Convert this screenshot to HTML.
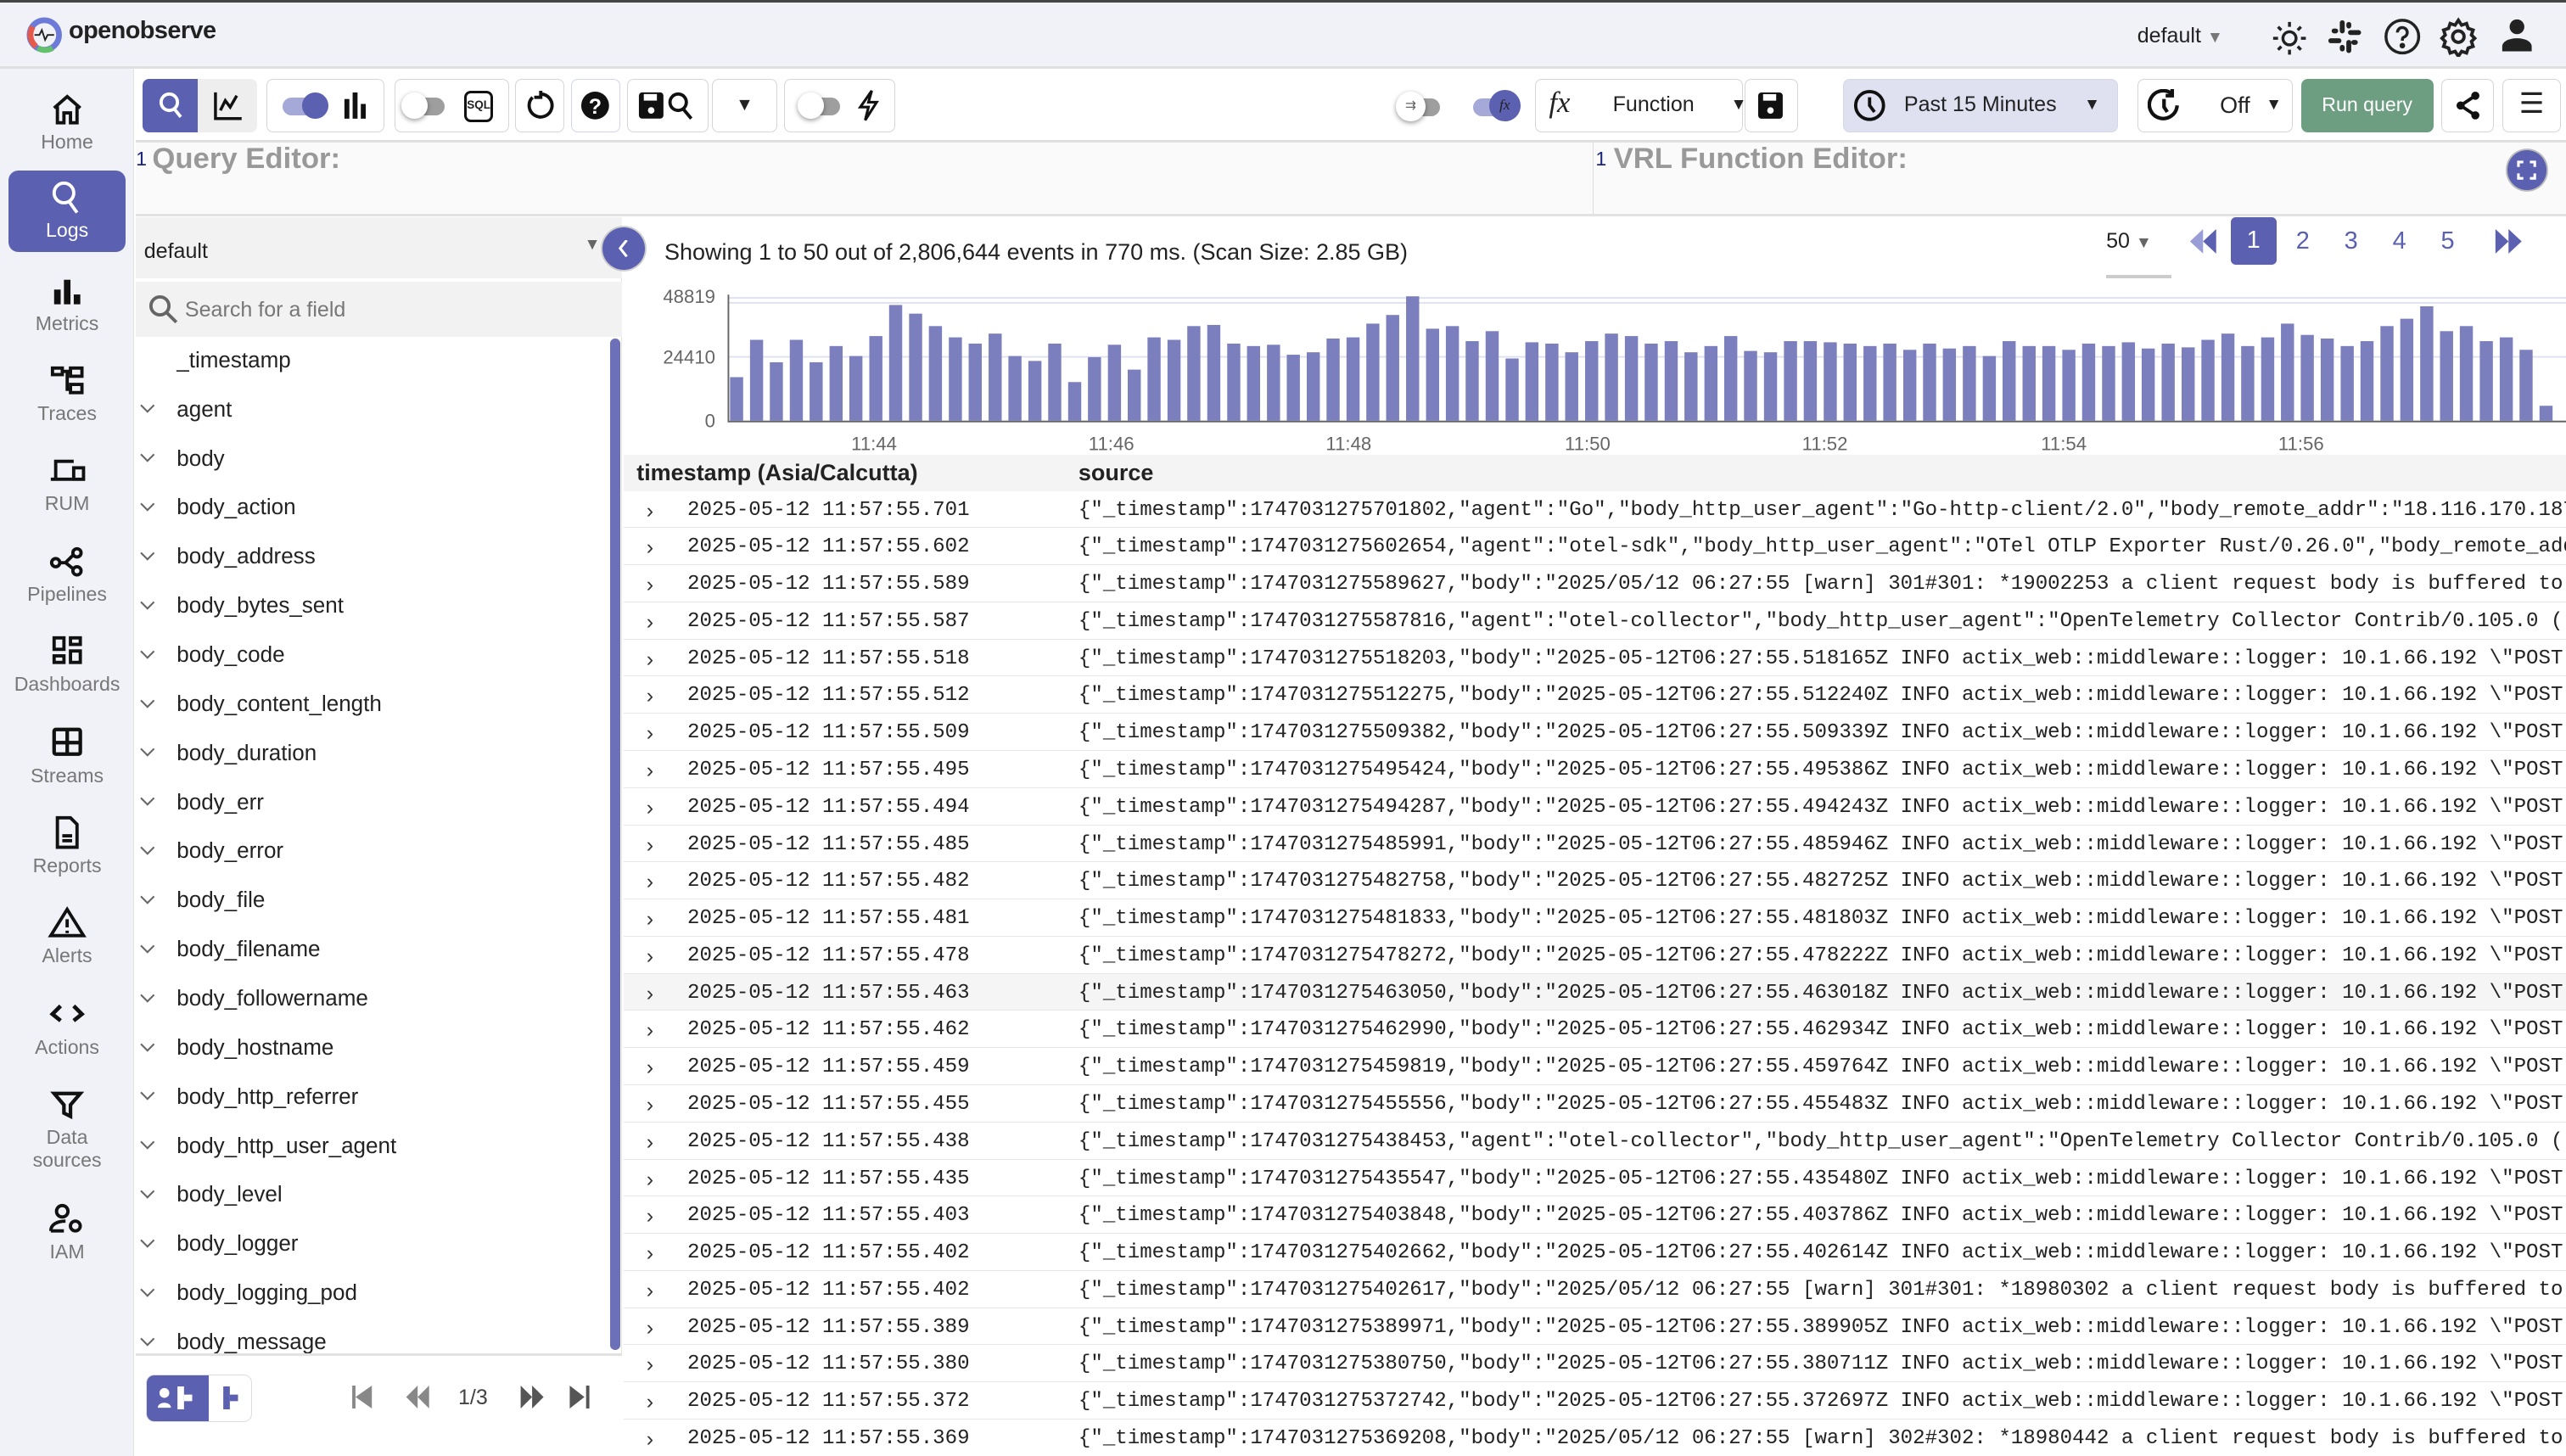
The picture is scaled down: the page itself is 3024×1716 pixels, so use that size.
<!DOCTYPE html>
<html><head><meta charset="utf-8"><style>
*{box-sizing:border-box;margin:0;padding:0}
html,body{width:3024px;height:1716px;overflow:hidden;background:#fff}
#r{zoom:1.92857;width:1568px;height:890px;position:relative;font-family:"Liberation Sans",sans-serif;color:#222;overflow:hidden}
.a{position:absolute}
.top{left:0;top:0;width:1568px;height:42px;background:#f1f2f7;border-top:2px solid #444;border-bottom:2px solid #e0e0e0}
.nav{left:0;top:42px;width:82px;height:848px;background:#f1f2f7;border-right:1px solid #e4e4e4}
.ni{position:absolute;left:5px;width:72px;text-align:center;font-size:12px;color:#777}
.ni svg{display:block;margin:0 auto 2px}
.tb{left:83px;top:44px;width:1485px;height:43px;background:#fff;border-bottom:2px solid #e0e0e0}
.btn{position:absolute;top:4px;height:33px;border:1px solid #d6d6d6;border-radius:4px;background:#fff}
.ed{top:87px;height:45px;background:#fafafa;border-bottom:2px solid #e2e2e2}
.fl{left:83px;top:133px;width:297px;height:757px;background:#fff;border-right:1px solid #e4e4e4}
.fi{position:absolute;left:25px;font-size:13.5px;color:#222}
.fi i{position:absolute;left:-21px;top:3px;width:6px;height:6px;border-right:1.4px solid #666;border-bottom:1.4px solid #666;transform:rotate(45deg)}
.row{position:absolute;left:381px;width:1187px;height:22.7px;border-bottom:1px solid #e6e6e6;font-family:"Liberation Mono",monospace;font-size:12.5px;line-height:24px;white-space:pre;overflow:hidden}
.row span.c{position:absolute;left:14px;color:#333;font-family:"Liberation Sans";font-size:13px}
.row span.t{position:absolute;left:39px}
.row span.s{position:absolute;left:278px}
</style></head><body><div id="r">
<div class="a top">
 <svg class="a" style="left:16px;top:9px" width="22" height="22" viewBox="0 0 22 22"><circle cx="11" cy="11" r="9" fill="none" stroke="#6c7ad8" stroke-width="3.5"/><path d="M4 6 A9 9 0 0 0 6 18" stroke="#e55a4a" stroke-width="3.5" fill="none"/><path d="M7 19 A9 9 0 0 0 16 19" stroke="#63c06c" stroke-width="3.5" fill="none"/><path d="M5 11h3l1.5-3 2 6 1.5-3h4" stroke="#222" stroke-width="1" fill="none"/></svg>
 <div class="a" style="left:42px;top:9px;font-size:15px;font-weight:bold;color:#222;letter-spacing:-.3px">openobserve</div>
 <div class="a" style="left:1306px;top:13px;font-size:13px">default <span style="color:#777;font-size:10px">▼</span></div>
 <svg class="a" style="left:1387px;top:10px" width="24" height="24" viewBox="0 0 24 24" fill="none" stroke="#222" stroke-width="1.8"><circle cx="12" cy="12" r="4"/><path d="M12 2v3M12 19v3M2 12h3M19 12h3M5 5l2 2M17 17l2 2M5 19l2-2M17 7l2-2"/></svg>
 <svg class="a" style="left:1422px;top:10px" width="22" height="22" viewBox="0 0 22 22" fill="#222"><rect x="8" y="1" width="3" height="8" rx="1.5"/><rect x="12" y="13" width="3" height="8" rx="1.5"/><rect x="1" y="12" width="8" height="3" rx="1.5"/><rect x="13" y="7" width="8" height="3" rx="1.5"/><rect x="3" y="6" width="4" height="3" rx="1.5"/><rect x="15" y="13" width="4" height="3" rx="1.5"/><rect x="12" y="2" width="3" height="4" rx="1.5"/><rect x="8" y="16" width="3" height="4" rx="1.5"/></svg>
 <svg class="a" style="left:1456px;top:9px" width="24" height="24" viewBox="0 0 24 24" fill="none" stroke="#222" stroke-width="1.8"><circle cx="12" cy="12" r="10"/><path d="M9 9.5a3 3 0 1 1 4 2.8c-1 .5-1 1-1 2.2"/><circle cx="12" cy="17.5" r=".8" fill="#222"/></svg>
 <svg class="a" style="left:1490px;top:9px" width="24" height="24" viewBox="0 0 24 24" fill="none" stroke="#222" stroke-width="2"><circle cx="12" cy="12" r="3.5"/><path d="M12 2l2 3 3-1 1 3 3 1-1 3 2 2-2 2 1 3-3 1-1 3-3-1-2 3-2-3-3 1-1-3-3-1 1-3-2-2 2-2-1-3 3-1 1-3 3 1z"/></svg>
 <svg class="a" style="left:1527px;top:9px" width="22" height="22" viewBox="0 0 22 22" fill="#222"><circle cx="11" cy="6" r="4.5"/><path d="M2 21v-3c0-3 4-5 9-5s9 2 9 5v3z"/></svg>
</div>
<div class="a nav">
 <div class="ni" style="top:14px"><svg width="22" height="22" viewBox="0 0 22 22" fill="none" stroke="#111" stroke-width="2"><path d="M3 10L11 3l8 7M5 9v10h4v-6h4v6h4V9"/></svg>Home</div>
 <div class="ni" style="top:62px;height:50px;background:#5b60b0;border-radius:6px;color:#fff;padding-top:6px"><svg width="22" height="22" viewBox="0 0 22 22" fill="none" stroke="#fff" stroke-width="2"><circle cx="9" cy="8" r="6"/><path d="M12 13l5 7"/></svg>Logs</div>
 <div class="ni" style="top:125px"><svg width="22" height="22" viewBox="0 0 22 22" fill="#111"><rect x="3" y="10" width="4" height="9"/><rect x="9" y="4" width="4" height="15"/><rect x="15" y="13" width="4" height="6"/></svg>Metrics</div>
 <div class="ni" style="top:180px"><svg width="22" height="22" viewBox="0 0 22 22" fill="none" stroke="#111" stroke-width="2"><rect x="2" y="3" width="6" height="4"/><rect x="13" y="3" width="7" height="5"/><rect x="13" y="13" width="7" height="5"/><path d="M8 5h5M11 5v11h2"/></svg>Traces</div>
 <div class="ni" style="top:235px"><svg width="24" height="22" viewBox="0 0 24 22" fill="none" stroke="#111" stroke-width="2"><path d="M5 15V5h11M2 16h13"/><rect x="16" y="9" width="6" height="7"/></svg>RUM</div>
 <div class="ni" style="top:290px"><svg width="24" height="22" viewBox="0 0 24 22" fill="none" stroke="#111" stroke-width="2"><circle cx="5" cy="12" r="2.5"/><circle cx="18" cy="6" r="2.5"/><circle cx="18" cy="17" r="2.5"/><path d="M7 12h4l5-5M11 12l5 4"/></svg>Pipelines</div>
 <div class="ni" style="top:345px"><svg width="22" height="22" viewBox="0 0 22 22" fill="none" stroke="#111" stroke-width="2"><rect x="3" y="3" width="6" height="7"/><rect x="13" y="3" width="6" height="4"/><rect x="3" y="14" width="6" height="4"/><rect x="13" y="11" width="6" height="7"/></svg>Dashboards</div>
 <div class="ni" style="top:401px"><svg width="22" height="22" viewBox="0 0 22 22" fill="none" stroke="#111" stroke-width="2.2"><rect x="3" y="3" width="16" height="15" rx="1"/><path d="M3 11h16M11 3v15"/></svg>Streams</div>
 <div class="ni" style="top:456px"><svg width="22" height="22" viewBox="0 0 22 22" fill="none" stroke="#111" stroke-width="2"><path d="M5 2h8l4 4v14H5z M8 13h6M8 16h6"/></svg>Reports</div>
 <div class="ni" style="top:511px"><svg width="24" height="22" viewBox="0 0 24 22" fill="none" stroke="#111" stroke-width="2"><path d="M12 3L2 19h20z"/><path d="M12 9v5M12 16v1.5"/></svg>Alerts</div>
 <div class="ni" style="top:567px"><svg width="24" height="22" viewBox="0 0 24 22" fill="none" stroke="#111" stroke-width="2.4"><path d="M8 6l-5 5 5 4M16 6l5 5-5 4"/></svg>Actions</div>
 <div class="ni" style="top:622px;line-height:14px"><svg width="22" height="22" viewBox="0 0 22 22" fill="none" stroke="#111" stroke-width="2.2"><path d="M3 4h16l-6 7v7l-4-2v-5z"/></svg>Data<br>sources</div>
 <div class="ni" style="top:692px"><svg width="24" height="22" viewBox="0 0 24 22" fill="none" stroke="#111" stroke-width="2"><circle cx="9" cy="6" r="3.5"/><path d="M2 18c0-4 4-6 9-6M2 18h8"/><circle cx="17" cy="15" r="3"/></svg>IAM</div>
</div>
<div class="a tb">
 <div class="btn" style="left:4px;width:34px;background:#5b60b0;border-color:#5b60b0;border-radius:4px 0 0 4px"><svg style="margin:7px 9px" width="16" height="18" viewBox="0 0 16 18" fill="none" stroke="#fff" stroke-width="2"><circle cx="7" cy="7" r="5"/><path d="M10 11l4 5"/></svg></div>
 <div class="btn" style="left:38px;width:36px;background:#eee;border-color:#eee;border-radius:0 4px 4px 0"><svg style="margin:7px 9px" width="18" height="18" viewBox="0 0 18 18" fill="none" stroke="#111" stroke-width="1.8"><path d="M1 1v16h16M4 12l3-6 3 4 4-7"/></svg></div>
 <div class="btn" style="left:80px;width:72px"><div class="a" style="left:9px;top:11px;width:24px;height:11px;background:#a5a9d8;border-radius:6px"></div><div class="a" style="left:21px;top:8px;width:16px;height:16px;background:#5b60b0;border-radius:50%"></div><svg class="a" style="left:46px;top:8px" width="16" height="16" fill="#111"><rect x="1" y="4" width="3" height="12"/><rect x="6" y="0" width="3" height="16"/><rect x="11" y="7" width="3" height="9"/></svg></div>
 <div class="btn" style="left:158px;width:70px"><div class="a" style="left:6px;top:11px;width:24px;height:11px;background:#9e9e9e;border-radius:6px"></div><div class="a" style="left:4px;top:8px;width:16px;height:16px;background:#fff;border-radius:50%;box-shadow:0 1px 3px rgba(0,0,0,.4)"></div><div class="a" style="left:42px;top:7px;width:18px;height:19px;border:2px solid #111;border-radius:4px;font-size:7px;font-weight:bold;line-height:15px;text-align:center">SQL</div></div>
 <div class="btn" style="left:232px;width:30px"><svg style="margin:7px 5px" width="18" height="18" viewBox="0 0 18 18" fill="none" stroke="#111" stroke-width="2"><path d="M5 4a7 7 0 1 0 5-2M10 0v4H6"/></svg></div>
 <div class="btn" style="left:266px;width:30px;border-color:#d3d5ee"><svg style="margin:7px 5px" width="18" height="18" viewBox="0 0 18 18"><circle cx="9" cy="9" r="8.5" fill="#111"/><text x="9" y="14" font-size="13" font-weight="bold" fill="#fff" text-anchor="middle" font-family="Liberation Sans">?</text></svg></div>
 <div class="btn" style="left:300px;width:50px"><svg class="a" style="left:6px;top:7px" width="36" height="18" viewBox="0 0 36 18"><rect x="1" y="1" width="15" height="16" rx="2" fill="#111"/><rect x="4" y="2" width="8" height="4" fill="#fff"/><circle cx="8.5" cy="12" r="2" fill="#fff"/><circle cx="25" cy="7" r="5" fill="none" stroke="#111" stroke-width="2"/><path d="M28 11l5 6" stroke="#111" stroke-width="2"/></svg></div>
 <div class="btn" style="left:352px;width:40px;font-size:11px;text-align:center;line-height:31px">▼</div>
 <div class="btn" style="left:396px;width:68px"><div class="a" style="left:12px;top:11px;width:22px;height:11px;background:#9e9e9e;border-radius:6px"></div><div class="a" style="left:8px;top:8px;width:16px;height:16px;background:#fff;border-radius:50%;box-shadow:0 1px 3px rgba(0,0,0,.4)"></div><svg class="a" style="left:44px;top:6px" width="14" height="20" viewBox="0 0 14 20" fill="none" stroke="#111" stroke-width="1.6"><path d="M9 1L2 11h5l-2 8 7-11H7z"/></svg></div>
 <div class="a" style="left:775px;top:16px;width:22px;height:11px;background:#9e9e9e;border-radius:6px"></div><div class="a" style="left:770px;top:12px;width:18px;height:18px;background:#fff;border-radius:50%;box-shadow:0 1px 3px rgba(0,0,0,.4);font-size:8px;text-align:center;line-height:18px;color:#666">⇉</div>
 <div class="a" style="left:817px;top:16px;width:22px;height:11px;background:#a5a9d8;border-radius:6px"></div><div class="a" style="left:827px;top:11px;width:19px;height:19px;background:#5b60b0;border-radius:50%;font-size:9px;font-style:italic;text-align:center;line-height:19px;font-family:'Liberation Serif'">fx</div>
 <div class="btn" style="left:855px;width:127px"><span class="a" style="left:8px;top:4px;font-family:'Liberation Serif';font-style:italic;font-size:18px">fx</span><span class="a" style="left:47px;top:8px;font-size:13px">Function</span><span class="a" style="left:119px;top:10px;font-size:10px">▼</span></div>
 <div class="btn" style="left:983px;width:33px"><svg style="margin:8px 8px" width="15" height="16" viewBox="0 0 15 16"><rect x="0" y="0" width="15" height="16" rx="2" fill="#111"/><rect x="3" y="1" width="8" height="4" fill="#fff"/><circle cx="7.5" cy="11" r="2" fill="#fff"/></svg></div>
 <div class="btn" style="left:1043px;width:168px;background:#dfe1f0;border-color:#d5d7e8"><svg class="a" style="left:6px;top:6px" width="20" height="20" viewBox="0 0 20 20" fill="none" stroke="#111" stroke-width="2"><circle cx="10" cy="10" r="8.5"/><path d="M10 5v5l3 4"/></svg><span class="a" style="left:37px;top:8px;font-size:13px">Past 15 Minutes</span><span class="a" style="left:147px;top:10px;font-size:10px">▼</span></div>
 <div class="btn" style="left:1223px;width:95px"><svg class="a" style="left:6px;top:6px" width="20" height="20" viewBox="0 0 20 20" fill="none" stroke="#111" stroke-width="2.2"><path d="M15 3A8.5 8.5 0 1 0 18 10M15 0v4h-4M10 6v5l2 3"/></svg><span class="a" style="left:50px;top:8px;font-size:14px">Off</span><span class="a" style="left:78px;top:10px;font-size:10px">▼</span></div>
 <div class="btn" style="left:1323px;width:81px;background:#6d9e81;border-color:#6d9e81;color:#fff;font-size:12px;text-align:center;line-height:31px">Run query</div>
 <div class="btn" style="left:1409px;width:32px"><svg style="margin:7px 8px" width="16" height="18" viewBox="0 0 16 18" fill="#111"><circle cx="12" cy="3" r="2.5"/><circle cx="3" cy="9" r="2.5"/><circle cx="12" cy="15" r="2.5"/><path d="M12 3L3 9l9 6" stroke="#111" stroke-width="2" fill="none"/></svg></div>
 <div class="btn" style="left:1446px;width:36px;font-size:17px;text-align:center;line-height:29px">☰</div>
</div>
<div class="a ed" style="left:83px;width:891px;border-right:1px solid #ddd"><span class="a" style="left:0;top:3px;font-size:12px;color:#1a237e">1</span><span class="a" style="left:10px;top:0;font-size:18px;font-weight:bold;color:#999">Query Editor:</span></div>
<div class="a ed" style="left:974px;width:594px"><span class="a" style="left:1px;top:3px;font-size:12px;color:#1a237e">1</span><span class="a" style="left:12px;top:0;font-size:18px;font-weight:bold;color:#999">VRL Function Editor:</span><div class="a" style="left:558px;top:5px;width:24px;height:24px;border-radius:50%;background:#5b60b0;box-shadow:0 0 0 1px #bbb"><svg style="margin:6px" width="12" height="12" fill="none" stroke="#fff" stroke-width="1.6"><path d="M1 4V1h3M8 1h3v3M11 8v3H8M4 11H1V8"/></svg></div></div>
<div class="a fl">
 <div class="a" style="left:0;top:0;width:297px;height:37px;background:#f2f2f2"><span class="a" style="left:5px;top:13px;font-size:13px">default</span><span class="a" style="left:274px;top:11px;font-size:10px;color:#666">▼</span></div>
 <div class="a" style="left:0;top:39px;width:297px;height:34px;background:#f2f2f2"><svg class="a" style="left:8px;top:8px" width="18" height="18" fill="none" stroke="#666" stroke-width="2"><circle cx="7" cy="7" r="5.5"/><path d="M11 11l6 6"/></svg><span class="a" style="left:30px;top:10px;font-size:13px;color:#777">Search for a field</span></div>
 <div class="a" style="left:290px;top:74px;width:6px;height:618px;background:#5b60b0;border-radius:3px;opacity:.9"></div>
 <div class="fi" style="top:79px">_timestamp</div>
 <div class="fi" style="top:109px"><i></i>agent</div>
 <div class="fi" style="top:139px"><i></i>body</div>
 <div class="fi" style="top:169px"><i></i>body_action</div>
 <div class="fi" style="top:199px"><i></i>body_address</div>
 <div class="fi" style="top:229px"><i></i>body_bytes_sent</div>
 <div class="fi" style="top:259px"><i></i>body_code</div>
 <div class="fi" style="top:289px"><i></i>body_content_length</div>
 <div class="fi" style="top:319px"><i></i>body_duration</div>
 <div class="fi" style="top:349px"><i></i>body_err</div>
 <div class="fi" style="top:379px"><i></i>body_error</div>
 <div class="fi" style="top:409px"><i></i>body_file</div>
 <div class="fi" style="top:439px"><i></i>body_filename</div>
 <div class="fi" style="top:469px"><i></i>body_followername</div>
 <div class="fi" style="top:499px"><i></i>body_hostname</div>
 <div class="fi" style="top:529px"><i></i>body_http_referrer</div>
 <div class="fi" style="top:559px"><i></i>body_http_user_agent</div>
 <div class="fi" style="top:589px"><i></i>body_level</div>
 <div class="fi" style="top:619px"><i></i>body_logger</div>
 <div class="fi" style="top:649px"><i></i>body_logging_pod</div>
 <div class="fi" style="top:679px"><i></i>body_message</div>
 <div class="a" style="left:0;top:694px;width:297px;height:63px;background:#fff;border-top:2px solid #e2e2e2"></div>
 <div class="a" style="left:6px;top:707px;width:65px;height:29px;border:1px solid #ddd;border-radius:5px;overflow:hidden"><div class="a" style="left:0;top:0;width:38px;height:29px;background:#5b60b0"></div><svg class="a" style="left:7px;top:7px" width="52" height="14" fill="#fff"><circle cx="4" cy="4" r="3"/><path d="M0 13c0-4 8-4 8 0z"/><rect x="12" y="0" width="4" height="14"/><rect x="16" y="5" width="5" height="4"/><g fill="#5b60b0"><rect x="40" y="0" width="4" height="14"/><rect x="44" y="5" width="5" height="4"/></g></svg></div>
 <svg class="a" style="left:132px;top:714px" width="150" height="14" viewBox="0 0 150 14"><g fill="#888"><rect x="0" y="0" width="2" height="14"/><path d="M2 7l10-7v14z"/><path d="M33 7l7-7v14z"/><path d="M40 7l7-7v14z"/></g><g fill="#555"><path d="M103 0l7 7-7 7z"/><path d="M110 0l7 7-7 7z"/><path d="M133 0l9 7-9 7z"/><rect x="143" y="0" width="2" height="14"/></g></svg>
 <span class="a" style="left:197px;top:714px;font-size:13px;color:#444">1/3</span>
</div>
<div class="a" style="left:368px;top:139px;width:26px;height:26px;border-radius:50%;background:#5b60b0;box-shadow:0 0 0 1px #ccc"><svg style="margin:8px 9px" width="8" height="10" fill="none" stroke="#fff" stroke-width="1.6"><path d="M6 0L2 5l4 5"/></svg></div>
<div class="a" style="left:406px;top:146px;font-size:14px">Showing 1 to 50 out of 2,806,644 events in 770 ms. (Scan Size: 2.85 GB)</div>
<div class="a" style="left:1287px;top:140px;font-size:13px">50 <span style="color:#666;font-size:10px">▼</span></div>
<div class="a" style="left:1287px;top:168px;width:40px;height:2px;background:#ccc"></div>
<svg class="a" style="left:1336px;top:140px" width="20" height="15"><path d="M10 0L2 7.5 10 15z" fill="#9a9ed6"/><path d="M18 0l-8 7.5 8 7.5z" fill="#5b60b0"/></svg>
<div class="a" style="left:1363px;top:133px;width:28px;height:29px;background:#5b60b0;border-radius:3px;color:#fff;text-align:center;line-height:29px;font-size:15px">1</div>
<div class="a" style="left:1403px;top:139px;font-size:15px;color:#5b60b0;word-spacing:17px">2 3 4 5</div>
<svg class="a" style="left:1523px;top:140px" width="20" height="15"><path d="M2 0l8 7.5L2 15z" fill="#5b60b0"/><path d="M10 0l8 7.5-8 7.5z" fill="#5b60b0"/></svg>
<svg class="a" style="left:381px;top:170px" width="1187" height="110" font-family="Liberation Sans" font-size="11.5" fill="#666">
 <text x="56" y="15" text-anchor="end">48819</text><text x="56" y="52" text-anchor="end">24410</text><text x="56" y="91" text-anchor="end">0</text>
 <line x1="64" y1="12" x2="1187" y2="12" stroke="#dfe1f0"/><line x1="64" y1="15" x2="1187" y2="15" stroke="#dfe1f0"/><line x1="64" y1="48" x2="1187" y2="48" stroke="#dfe1f0"/>
 <line x1="64" y1="10" x2="64" y2="88" stroke="#666"/><line x1="64" y1="87.5" x2="1187" y2="87.5" stroke="#666"/>
 <text x="153" y="105" text-anchor="middle">11:44</text><text x="298" y="105" text-anchor="middle">11:46</text><text x="443" y="105" text-anchor="middle">11:48</text><text x="589" y="105" text-anchor="middle">11:50</text><text x="734" y="105" text-anchor="middle">11:52</text><text x="880" y="105" text-anchor="middle">11:54</text><text x="1025" y="105" text-anchor="middle">11:56</text>
 <g id="bars" fill="#7b7fbd"></g>
</svg>
<div class="a" style="left:381px;top:278px;width:1187px;height:22px;background:#f4f4f4;font-size:14px;font-weight:bold"><span class="a" style="left:8px;top:3px">timestamp (Asia/Calcutta)</span><span class="a" style="left:278px;top:3px">source</span></div>
<div id="rows">
<div class="row" style="top:300px"><span class="c">›</span><span class="t">2025-05-12 11:57:55.701</span><span class="s">{"_timestamp":1747031275701802,"agent":"Go","body_http_user_agent":"Go-http-client/2.0","body_remote_addr":"18.116.170.187"</span></div>
<div class="row" style="top:322.7px"><span class="c">›</span><span class="t">2025-05-12 11:57:55.602</span><span class="s">{"_timestamp":1747031275602654,"agent":"otel-sdk","body_http_user_agent":"OTel OTLP Exporter Rust/0.26.0","body_remote_addr"</span></div>
<div class="row" style="top:345.4px"><span class="c">›</span><span class="t">2025-05-12 11:57:55.589</span><span class="s">{"_timestamp":1747031275589627,"body":"2025/05/12 06:27:55 [warn] 301#301: *19002253 a client request body is buffered to</span></div>
<div class="row" style="top:368.1px"><span class="c">›</span><span class="t">2025-05-12 11:57:55.587</span><span class="s">{"_timestamp":1747031275587816,"agent":"otel-collector","body_http_user_agent":"OpenTelemetry Collector Contrib/0.105.0 (</span></div>
<div class="row" style="top:390.8px"><span class="c">›</span><span class="t">2025-05-12 11:57:55.518</span><span class="s">{"_timestamp":1747031275518203,"body":"2025-05-12T06:27:55.518165Z INFO actix_web::middleware::logger: 10.1.66.192 \"POST</span></div>
<div class="row" style="top:413.5px"><span class="c">›</span><span class="t">2025-05-12 11:57:55.512</span><span class="s">{"_timestamp":1747031275512275,"body":"2025-05-12T06:27:55.512240Z INFO actix_web::middleware::logger: 10.1.66.192 \"POST</span></div>
<div class="row" style="top:436.2px"><span class="c">›</span><span class="t">2025-05-12 11:57:55.509</span><span class="s">{"_timestamp":1747031275509382,"body":"2025-05-12T06:27:55.509339Z INFO actix_web::middleware::logger: 10.1.66.192 \"POST</span></div>
<div class="row" style="top:458.9px"><span class="c">›</span><span class="t">2025-05-12 11:57:55.495</span><span class="s">{"_timestamp":1747031275495424,"body":"2025-05-12T06:27:55.495386Z INFO actix_web::middleware::logger: 10.1.66.192 \"POST</span></div>
<div class="row" style="top:481.6px"><span class="c">›</span><span class="t">2025-05-12 11:57:55.494</span><span class="s">{"_timestamp":1747031275494287,"body":"2025-05-12T06:27:55.494243Z INFO actix_web::middleware::logger: 10.1.66.192 \"POST</span></div>
<div class="row" style="top:504.3px"><span class="c">›</span><span class="t">2025-05-12 11:57:55.485</span><span class="s">{"_timestamp":1747031275485991,"body":"2025-05-12T06:27:55.485946Z INFO actix_web::middleware::logger: 10.1.66.192 \"POST</span></div>
<div class="row" style="top:527px"><span class="c">›</span><span class="t">2025-05-12 11:57:55.482</span><span class="s">{"_timestamp":1747031275482758,"body":"2025-05-12T06:27:55.482725Z INFO actix_web::middleware::logger: 10.1.66.192 \"POST</span></div>
<div class="row" style="top:549.7px"><span class="c">›</span><span class="t">2025-05-12 11:57:55.481</span><span class="s">{"_timestamp":1747031275481833,"body":"2025-05-12T06:27:55.481803Z INFO actix_web::middleware::logger: 10.1.66.192 \"POST</span></div>
<div class="row" style="top:572.4px"><span class="c">›</span><span class="t">2025-05-12 11:57:55.478</span><span class="s">{"_timestamp":1747031275478272,"body":"2025-05-12T06:27:55.478222Z INFO actix_web::middleware::logger: 10.1.66.192 \"POST</span></div>
<div class="row" style="top:595.1px;background:#f5f5f5"><span class="c">›</span><span class="t">2025-05-12 11:57:55.463</span><span class="s">{"_timestamp":1747031275463050,"body":"2025-05-12T06:27:55.463018Z INFO actix_web::middleware::logger: 10.1.66.192 \"POST</span></div>
<div class="row" style="top:617.8px"><span class="c">›</span><span class="t">2025-05-12 11:57:55.462</span><span class="s">{"_timestamp":1747031275462990,"body":"2025-05-12T06:27:55.462934Z INFO actix_web::middleware::logger: 10.1.66.192 \"POST</span></div>
<div class="row" style="top:640.5px"><span class="c">›</span><span class="t">2025-05-12 11:57:55.459</span><span class="s">{"_timestamp":1747031275459819,"body":"2025-05-12T06:27:55.459764Z INFO actix_web::middleware::logger: 10.1.66.192 \"POST</span></div>
<div class="row" style="top:663.2px"><span class="c">›</span><span class="t">2025-05-12 11:57:55.455</span><span class="s">{"_timestamp":1747031275455556,"body":"2025-05-12T06:27:55.455483Z INFO actix_web::middleware::logger: 10.1.66.192 \"POST</span></div>
<div class="row" style="top:685.9px"><span class="c">›</span><span class="t">2025-05-12 11:57:55.438</span><span class="s">{"_timestamp":1747031275438453,"agent":"otel-collector","body_http_user_agent":"OpenTelemetry Collector Contrib/0.105.0 (</span></div>
<div class="row" style="top:708.6px"><span class="c">›</span><span class="t">2025-05-12 11:57:55.435</span><span class="s">{"_timestamp":1747031275435547,"body":"2025-05-12T06:27:55.435480Z INFO actix_web::middleware::logger: 10.1.66.192 \"POST</span></div>
<div class="row" style="top:731.3px"><span class="c">›</span><span class="t">2025-05-12 11:57:55.403</span><span class="s">{"_timestamp":1747031275403848,"body":"2025-05-12T06:27:55.403786Z INFO actix_web::middleware::logger: 10.1.66.192 \"POST</span></div>
<div class="row" style="top:754px"><span class="c">›</span><span class="t">2025-05-12 11:57:55.402</span><span class="s">{"_timestamp":1747031275402662,"body":"2025-05-12T06:27:55.402614Z INFO actix_web::middleware::logger: 10.1.66.192 \"POST</span></div>
<div class="row" style="top:776.7px"><span class="c">›</span><span class="t">2025-05-12 11:57:55.402</span><span class="s">{"_timestamp":1747031275402617,"body":"2025/05/12 06:27:55 [warn] 301#301: *18980302 a client request body is buffered to</span></div>
<div class="row" style="top:799.4px"><span class="c">›</span><span class="t">2025-05-12 11:57:55.389</span><span class="s">{"_timestamp":1747031275389971,"body":"2025-05-12T06:27:55.389905Z INFO actix_web::middleware::logger: 10.1.66.192 \"POST</span></div>
<div class="row" style="top:822.1px"><span class="c">›</span><span class="t">2025-05-12 11:57:55.380</span><span class="s">{"_timestamp":1747031275380750,"body":"2025-05-12T06:27:55.380711Z INFO actix_web::middleware::logger: 10.1.66.192 \"POST</span></div>
<div class="row" style="top:844.8px"><span class="c">›</span><span class="t">2025-05-12 11:57:55.372</span><span class="s">{"_timestamp":1747031275372742,"body":"2025-05-12T06:27:55.372697Z INFO actix_web::middleware::logger: 10.1.66.192 \"POST</span></div>
<div class="row" style="top:867.5px"><span class="c">›</span><span class="t">2025-05-12 11:57:55.369</span><span class="s">{"_timestamp":1747031275369208,"body":"2025/05/12 06:27:55 [warn] 302#302: *18980442 a client request body is buffered to</span></div>
</div>
</div>
<script>
var h=[.35,.65,.47,.65,.47,.6,.52,.68,.93,.86,.76,.67,.62,.7,.52,.48,.62,.31,.51,.61,.41,.67,.65,.76,.77,.62,.6,.61,.53,.55,.66,.67,.78,.85,1,.74,.76,.64,.72,.5,.63,.62,.55,.64,.7,.68,.62,.64,.55,.6,.68,.56,.55,.64,.64,.63,.62,.6,.62,.57,.62,.58,.6,.52,.64,.6,.6,.57,.62,.6,.63,.58,.62,.59,.65,.7,.6,.67,.78,.69,.66,.6,.64,.76,.82,.92,.72,.76,.64,.67,.57,.12];
var g=document.getElementById('bars'),s='';
for(var i=0;i<h.length;i++){var x=65+i*12.15,hh=h[i]*76;s+='<rect x="'+x.toFixed(1)+'" y="'+(87-hh).toFixed(1)+'" width="8" height="'+hh.toFixed(1)+'"/>';}
g.innerHTML=s;
</script>
</body></html>
